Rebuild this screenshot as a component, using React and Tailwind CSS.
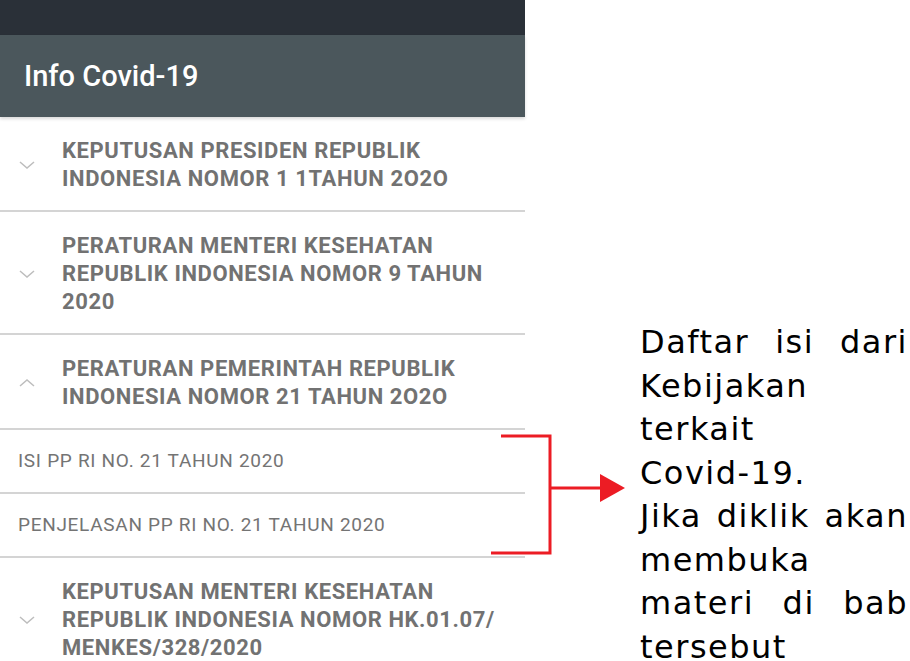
import React from "react";

const ChevronDown = () => (
  <svg width="16" height="8" viewBox="0 0 16 8" className="shrink-0">
    <path d="M1 1 L8 7 L15 1" fill="none" stroke="#bdbdbd" strokeWidth="1.5" />
  </svg>
);

const ChevronUp = () => (
  <svg width="16" height="8" viewBox="0 0 16 8" className="shrink-0">
    <path d="M1 7 L8 1 L15 7" fill="none" stroke="#bdbdbd" strokeWidth="1.5" />
  </svg>
);

const sections = [
  {
    lines: ["KEPUTUSAN PRESIDEN REPUBLIK", "INDONESIA NOMOR 1 1TAHUN 2O2O"],
    open: false,
  },
  {
    lines: [
      "PERATURAN MENTERI KESEHATAN",
      "REPUBLIK INDONESIA NOMOR 9 TAHUN",
      "2020",
    ],
    open: false,
  },
  {
    lines: ["PERATURAN PEMERINTAH REPUBLIK", "INDONESIA NOMOR 21 TAHUN 2O2O"],
    open: true,
    children: ["ISI PP RI NO. 21 TAHUN 2020", "PENJELASAN PP RI NO. 21 TAHUN 2020"],
  },
  {
    lines: [
      "KEPUTUSAN MENTERI KESEHATAN",
      "REPUBLIK INDONESIA NOMOR HK.01.07/",
      "MENKES/328/2020",
    ],
    open: false,
  },
];

const Section = ({ section }) => (
  <>
    <div className="flex items-center border-b-2 border-[#d4d4d4] pl-[19px] pt-5 pb-[17px]">
      {section.open ? <ChevronUp /> : <ChevronDown />}
      <div className="ml-[27px] text-[22px] leading-[28px] tracking-[0.6px] font-bold text-[#727272]">
        {section.lines.map((line, i) => (
          <div key={i} className="whitespace-nowrap">
            {line}
          </div>
        ))}
      </div>
    </div>
    {section.open &&
      section.children.map((child, i) => (
        <div
          key={i}
          className="flex h-16 items-center border-b-2 border-[#d4d4d4] pl-[18px] text-[19px] tracking-[0.7px] text-[#747474] whitespace-nowrap"
        >
          {child}
        </div>
      ))}
  </>
);

export default function App() {
  return (
    <div className="relative flex h-[661px] w-[910px] overflow-hidden bg-white">
      <div
        className="w-[525px] shrink-0"
        style={{ fontFamily: "Roboto, 'Liberation Sans', sans-serif" }}
      >
        <div className="h-[35px] bg-[#2a3038]" />
        <div className="flex h-[82px] items-center bg-[#4b575c] pl-6 shadow-[0_2px_3px_rgba(0,0,0,0.15)]">
          <span className="pt-0.5 text-[29px] font-medium text-white">Info Covid-19</span>
        </div>
        {sections.map((s, i) => (
          <Section key={i} section={s} />
        ))}
      </div>

      <div
        className="pl-[115px] pt-[321px] text-[32px] leading-[43.5px] tracking-[1.5px] text-black"
        style={{ fontFamily: "'DejaVu Sans', Verdana, sans-serif" }}
      >
        <p className="w-[268px] text-justify">
          Daftar isi dari Kebijakan terkait{" "}
          <span className="whitespace-nowrap">Covid-19.</span>
        </p>
        <p className="w-[268px] text-justify">
          Jika diklik akan membuka materi di bab tersebut
        </p>
      </div>

      {/* red bracket pointing to the sub items */}
      <svg
        className="absolute left-[488px] top-[432px]"
        width="140"
        height="126"
        viewBox="0 0 140 126"
      >
        <path
          d="M13 4 H62 V121 H3 M62 56 H114"
          fill="none"
          stroke="#ec1c24"
          strokeWidth="3"
        />
        <path d="M112 42 L137 56 L112 70 Z" fill="#ec1c24" />
      </svg>
    </div>
  );
}
